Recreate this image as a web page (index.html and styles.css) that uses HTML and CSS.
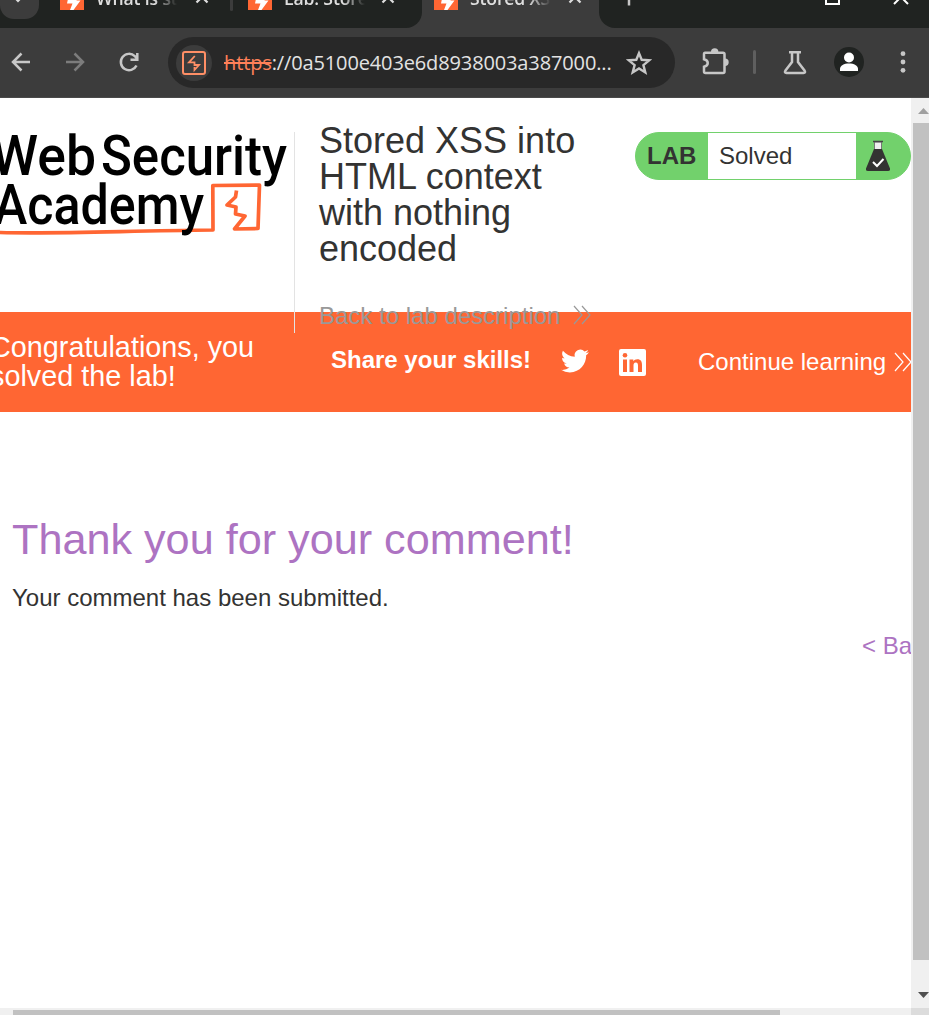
FILE: index.html
```html
<!DOCTYPE html>
<html lang="en">
<head>
<meta charset="utf-8">
<title>Stored XSS into HTML context with nothing encoded</title>
<link rel="stylesheet" href="styles.css">
</head>
<body>
<svg width="0" height="0" class="defs">
  <symbol id="fav" viewBox="0 0 24 24"><rect width="24" height="24" fill="#ff6633"/><path d="M9 8L7 17.500h5.500L10 24h3.500L20.500 14.500h-4l3-6.500z" fill="#fff"/></symbol>
  <symbol id="close" viewBox="0 0 14 14"><path d="M1.500 1.500l11 11M12.500 1.500l-11 11" fill="none" stroke="currentColor" stroke-width="2.200"/></symbol>
  <symbol id="chevrons" viewBox="0 0 18 20"><path d="M1 1l8 9-8 9M9 1l8 9-8 9" fill="none" stroke="currentColor" stroke-width="1.200"/></symbol>
</svg>
<div class="browser">
  <div class="tabs">
    <div class="inactive-tabs">
      <div class="tab-search"><svg width="8" height="6" viewBox="0 0 8 6"><path d="M1 1l3 3 3-3" fill="none" stroke="#ddd" stroke-width="2"/></svg></div>
      <div class="tab tab-first"><svg class="fav"><use href="#fav"/></svg><span class="tab-title">What is stored</span><svg class="x"><use href="#close"/></svg></div>
      <i class="tab-line"></i>
      <div class="tab tab-second"><svg class="fav"><use href="#fav"/></svg><span class="tab-title">Lab: Stored</span><svg class="x"><use href="#close"/></svg></div>
    </div>
    <div class="tab active"><svg class="fav"><use href="#fav"/></svg><span class="tab-title">Stored XSS</span><svg class="x"><use href="#close"/></svg></div>
    <div class="window-controls">
      <svg width="330" height="28" viewBox="0 0 330 28"><path d="M30 0v5.500" stroke="#c7c7c7" stroke-width="2.500"/><path d="M227 -5v9h13V-5" fill="none" stroke="#fff" stroke-width="2"/><path d="M295 4l15-15M309 4l-15-15" fill="none" stroke="#fff" stroke-width="2"/></svg>
    </div>
  </div>
  <div class="toolbar">
    <svg class="nav" width="168" height="70" viewBox="0 0 168 70" fill="none" stroke-width="2.500">
      <path d="M30 34H13.500M21.500 25.500L13 34l8.500 8.500" stroke="#c7c7c7"/>
      <path d="M66 34h16.500M74.500 25.500L83 34l-8.500 8.500" stroke="#7c7c7c"/>
      <path d="M136.500 37.500a8.200 8.200 0 1 1-1.700-9.300l2.700 2.800M137.300 25v6.800h-6.800" stroke="#c7c7c7"/>
    </svg>
    <div class="address">
      <span class="site"><svg width="24" height="24" viewBox="0 0 24 24" fill="none" stroke="#ff8f66"><rect x="1" y="1" width="22" height="22" rx="2" stroke-width="2"/><path d="M12.800 5L7 11.300h5.500v2.700h4.500L12.500 19v-3" stroke-width="1.800"/></svg></span>
      <span class="url"><s>https</s>://0a5100e403e6d8938003a387000...</span>
      <svg class="star" width="26" height="26" viewBox="0 0 26 26"><path d="M13 3.200l2.700 6.600 7.500.5-5.800 4.800 1.900 7.300-6.300-4-6.300 4 1.900-7.300-5.800-4.800 7.500-.5z" fill="none" stroke="#c7c7c7" stroke-width="2.400"/></svg>
    </div>
    <svg class="tools" width="254" height="70" viewBox="0 0 254 70" fill="none" stroke="#c7c7c7">
      <path d="M30 24.800h18q1.500 0 1.500 1.500v17.200q0 1.500-1.500 1.500H30.500q-1.500 0-1.500-1.500v-4.700c5-1.200 5-6.400 0-7.600v-4.900q0-1.500 1-1.500z" stroke-width="2.500"/>
      <path d="M36 24a3.700 3.700 0 0 1 7.400 0zM50 30.500a3.700 3.700 0 0 1 0 7.400z" fill="#c7c7c7" stroke="none"/>
      <path d="M79.500 23.500v21" stroke="#5f5f5f" stroke-width="3" stroke-linecap="round"/>
      <path d="M114 24.200h12M117 25v9l-6.500 8.500q-1.500 2.500 1 2.500h17q2.500 0 1-2.500L123 34v-9" stroke-width="2.500"/>
      <circle cx="174" cy="34" r="15" fill="#202321" stroke="none"/><circle cx="174" cy="29.500" r="5" fill="#fff" stroke="none"/><path d="M165 43v-2c0-3.500 4-5.500 9-5.500s9 2 9 5.500v2z" fill="#fff" stroke="none"/>
      <g fill="#c7c7c7" stroke="none"><circle cx="228" cy="25.700" r="2.400"/><circle cx="228" cy="34" r="2.400"/><circle cx="228" cy="42.300" r="2.400"/></g>
    </svg>
  </div>
  <div class="frame">
    <main class="page">
      <header class="lab-header">
        <svg class="logo" width="294" height="130" viewBox="0 120 294 130">
          <g class="logo-text">
            <text x="-9" y="175" textLength="105" lengthAdjust="spacingAndGlyphs">Web</text>
            <text x="101" y="175" textLength="186" lengthAdjust="spacingAndGlyphs">Security</text>
          </g>
          <path d="M0 232.500c60 1.500 120-1.500 213-2.500l-.2-44.500 46.700-.5-1.500 43.500-23.500.5 10.500-13-9.500-2 .5-7-9-2 8.500-8 1-6.500" fill="none" stroke="#ff6633" stroke-width="3.700" stroke-linejoin="round"/>
          <g class="logo-text"><text x="-6" y="224" textLength="210" lengthAdjust="spacingAndGlyphs">Academy</text></g>
        </svg>
        <div class="title">
          <h2>Stored XSS into HTML context with nothing encoded</h2>
          <a class="back">Back to lab description <svg class="chev"><use href="#chevrons"/></svg></a>
        </div>
        <div class="status">
          <b>LAB</b><span class="solved">Solved</span>
          <svg class="flask" width="24" height="32" viewBox="0 0 24 32"><path d="M8.500 2h7v9h-7z" fill="#eee" stroke="#777"/><path d="M7 1.500h10" stroke="#444" stroke-width="1.500"/><path d="M8 9h8l8 19.500q.5 2.500-2 2.500H2q-2.500 0-2-2.500z" fill="#333332"/><path d="M7 22l4 4 6.500-7" fill="none" stroke="#fff" stroke-width="2"/></svg>
        </div>
      </header>
      <section class="banner">
        <h4>Congratulations, you solved the lab!</h4>
        <b class="share">Share your skills!</b>
        <svg class="twitter" width="28" height="28" viewBox="0 0 24 24" fill="#fff"><path d="M23.950 4.570a10 10 0 0 1-2.820.77 4.960 4.960 0 0 0 2.160-2.720c-.95.550-2 .950-3.120 1.180a4.920 4.920 0 0 0-8.380 4.480C7.690 8.100 4.070 6.130 1.640 3.160a4.820 4.820 0 0 0-.67 2.480c0 1.710.870 3.210 2.190 4.100a4.900 4.900 0 0 1-2.230-.620v.060a4.920 4.920 0 0 0 3.950 4.830 5 5 0 0 1-2.210.080 4.940 4.940 0 0 0 4.600 3.420A9.870 9.870 0 0 1 0 19.540a13.990 13.990 0 0 0 7.550 2.210c9.050 0 14-7.500 14-13.980 0-.210 0-.420-.020-.630a9.940 9.940 0 0 0 2.420-2.570z"/></svg>
        <svg class="linkedin" width="27" height="27" viewBox="0 0 27 27"><rect width="27" height="27" rx="2" fill="#fff"/><path d="M4 10.500h4V23H4zM10.500 10.500h3.800v1.700c.8-1.300 2.200-2 4-2 3.700 0 4.700 2.400 4.700 5.700V23h-4v-6.300c0-1.700-.3-3.200-2.200-3.200s-2.300 1.500-2.300 3.100V23h-4z" fill="#ff6633"/><circle cx="6" cy="6.300" r="2.300" fill="#ff6633"/></svg>
        <a class="continue">Continue learning</a><svg class="chev"><use href="#chevrons"/></svg>
      </section>
      <section class="content">
        <h1>Thank you for your comment!</h1>
        <p>Your comment has been submitted.</p>
        <a class="back-blog">&lt; Back to blog</a>
      </section>
    </main>
    <div class="vbar"><svg width="18" height="25" viewBox="0 0 18 25"><path d="M7 16l5.500-6 5.500 6z" fill="#a0a0a0"/></svg><i class="vthumb"></i><svg width="18" height="48" viewBox="0 0 18 48"><path d="M7 32h11l-5.500 6z" fill="#505050"/></svg></div>
    <div class="hbar"><i class="hthumb"></i></div>
    <div class="corner"></div>
  </div>
</div>
</body>
</html>
```

FILE: styles.css
```css
* { box-sizing: border-box; }
body { margin: 0; background: #fff; font-family: "Liberation Sans", Arial, sans-serif; color: #333332; }
h1, h2, h4, p { margin: 0; font-weight: 400; }
svg { display: block; flex: none; }
.defs { position: absolute; }
.browser { width: 929px; height: 1015px; overflow: hidden; }

.tabs { display: flex; height: 28px; background: #3c3c3c; overflow: hidden; }
.inactive-tabs { display: flex; width: 422px; height: 28px; background: #202321; border-bottom-right-radius: 16px; }
.tab-search { width: 39px; height: 19px; background: #3c3c3c; border-radius: 0 0 14px 14px; padding: 0 0 0 14px; }
.tab-search svg { margin-top: -3px; }
.tab { display: flex; height: 28px; color: #dedede; }
.tab-first { width: 190px; padding-left: 21px; }
.tab-line { width: 3px; height: 11px; background: #3c3c3c; border-radius: 0 0 2px 2px; margin-left: 1px; }
.tab-second { width: 188px; padding-left: 15px; }
.active { width: 177px; padding-left: 12px; }
.fav { width: 24px; height: 24px; margin-top: -14px; }
.tab-title { width: 81px; margin: -15px 0 0 12px; height: 30px; overflow: hidden; white-space: nowrap; font: 600 17.6px/26px "Open Sans", "Noto Sans", sans-serif; letter-spacing: -.15px; -webkit-mask-image: linear-gradient(90deg, #000 72%, transparent); mask-image: linear-gradient(90deg, #000 72%, transparent); }
.x { width: 14px; height: 14px; margin: -10px 0 0 18px; }
.tab-second .x { margin-left: 16px; }
.active .x { margin-left: 17px; }
.window-controls { width: 330px; height: 28px; background: #202321; border-bottom-left-radius: 16px; }

.toolbar { display: flex; height: 70px; background: #3c3c3c; border-bottom: 1px solid #4a4a4a; }
.address { display: flex; align-items: center; width: 507px; height: 51px; margin-top: 9px; border-radius: 26px; background: #282828; }
.site { display: grid; place-items: center; width: 36px; height: 36px; margin-left: 8px; border-radius: 50%; background: #3c3c3c; }
.url { width: 402px; margin-left: 12px; white-space: nowrap; color: #e3e3e3; font: 20px/28px "Open Sans", "Noto Sans", sans-serif; letter-spacing: -.13px; }
.url s { color: #ff8059; }

.frame { display: grid; grid-template: 910px 7px / 911px 18px; }
.page { overflow: hidden; background: #fff; }
.lab-header { display: flex; align-items: flex-start; height: 214px; position: relative; z-index: 1; }
.logo { margin-top: 22px; }
.logo-text { font: 500 56px Roboto, sans-serif; fill: #000; }
.title { width: 341px; height: 201px; margin-top: 34px; padding-left: 24px; border-left: 1px solid #e3e3e3; }
.title h2 { width: 275px; margin-top: -9px; font-size: 36px; line-height: 36px; }
.back { display: flex; align-items: center; margin-top: 35px; height: 28px; color: #999; font-size: 24px; line-height: 28px; }
.chev { width: 18px; height: 20px; }
.back .chev { margin: -3px 0 0 13px; }
.status { display: flex; align-items: center; width: 276px; height: 48px; margin-top: 34px; border: 1px solid #72d16c; border-radius: 24px; background: #72d16c; overflow: hidden; font-size: 24px; }
.status b { width: 72px; padding-left: 11px; }
.solved { width: 148px; height: 46px; line-height: 46px; padding-left: 11px; background: #fff; }
.flask { margin-left: 10px; }

.banner { display: flex; width: 930px; height: 100px; background: #ff6633; color: #fff; font-size: 24px; line-height: 28px; }
.banner h4 { width: 288px; margin: 21px 0 0 -10px; font-size: 28.8px; line-height: 29px; }
.share { margin: 34px 0 0 53px; width: 202px; }
.twitter { margin: 35px 0 0 28px; }
.linkedin { margin: 37px 0 0 30px; }
.continue { width: 189px; margin: 36px 0 0 52px; white-space: nowrap; }
.banner .chev { margin: 40px 0 0 7px; }

.content { padding: 102px 0 0 12px; width: 1040px; }
h1 { color: #ad73c2; font-size: 43.2px; line-height: 50px; }
.content p { margin-top: 20px; font-size: 24px; line-height: 28px; }
.back-blog { display: block; margin: 20px 0 0 850px; color: #ad73c2; font-size: 24px; line-height: 28px; white-space: nowrap; }

.vbar { display: flex; flex-direction: column; background: #f0f0f0; }
.vthumb { height: 837px; margin-left: 2px; background: #c1c1c1; }
.hbar { background: #f0f0f0; padding: 2px 0 0 13px; }
.hthumb { display: block; width: 767px; height: 5px; background: #c1c1c1; }
.corner { background: #dcdcdc; }
```
